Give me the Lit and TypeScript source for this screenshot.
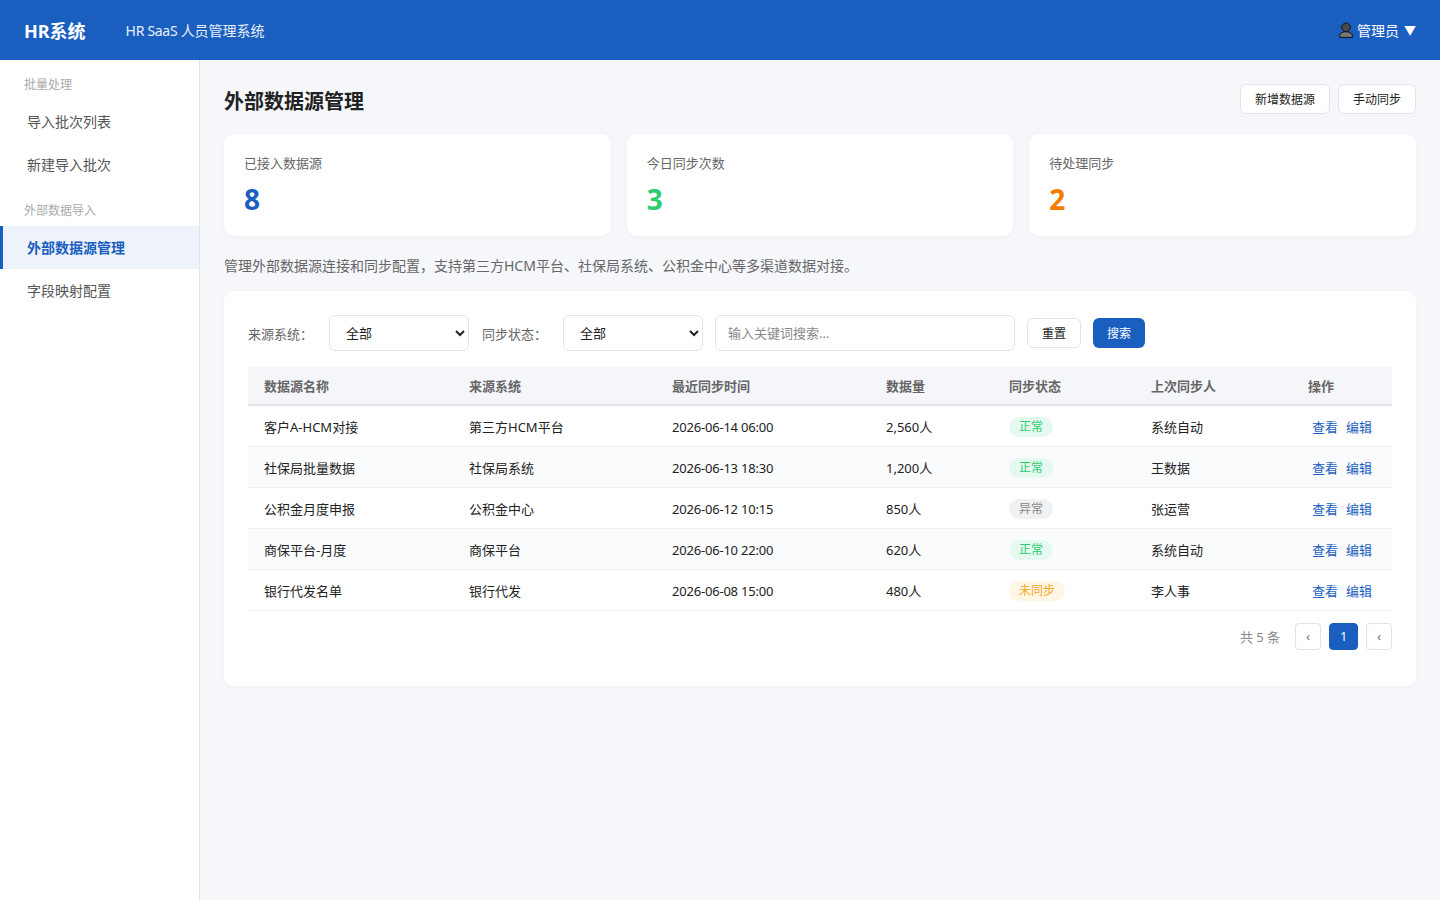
import { LitElement, html, css } from 'lit';
import { customElement } from 'lit/decorators.js';

type Row = {
  name: string;
  source: string;
  time: string;
  count: string;
  status: 'ok' | 'err' | 'none';
  label: string;
  user: string;
};

const ROWS: Row[] = [
  { name: '客户A-HCM对接', source: '第三方HCM平台', time: '2026-06-14 06:00', count: '2,560人', status: 'ok', label: '正常', user: '系统自动' },
  { name: '社保局批量数据', source: '社保局系统', time: '2026-06-13 18:30', count: '1,200人', status: 'ok', label: '正常', user: '王数据' },
  { name: '公积金月度申报', source: '公积金中心', time: '2026-06-12 10:15', count: '850人', status: 'err', label: '异常', user: '张运营' },
  { name: '商保平台-月度', source: '商保平台', time: '2026-06-10 22:00', count: '620人', status: 'ok', label: '正常', user: '系统自动' },
  { name: '银行代发名单', source: '银行代发', time: '2026-06-08 15:00', count: '480人', status: 'none', label: '未同步', user: '李人事' },
];

@customElement('app-root')
export class AppRoot extends LitElement {
  static styles = css`
    :host {
      display: block;
      min-height: 900px;
      background: #f5f7fb;
      color: #222;
      font-family: 'Noto Sans', 'Noto Sans CJK SC', sans-serif;
      font-size: 14px;
    }
    * { box-sizing: border-box; }

    .topbar {
      height: 60px;
      background: #1a5fbf;
      color: #fff;
      display: flex;
      align-items: center;
      padding: 0 24px;
    }
    .logo { font-size: 18px; font-weight: 700; margin-right: 40px; }
    .subtitle { font-size: 14px; opacity: 0.9; }
    .subtitle .latin { letter-spacing: -0.3px; }
    .user { margin-left: auto; font-size: 14px; display: flex; align-items: center; gap: 4px; }
    .user svg { width: 14px; height: 16px; }
    .caret { font-size: 12px; margin-left: 1px; }

    .body { display: flex; min-height: 840px; }

    .sidebar {
      width: 200px;
      flex: none;
      background: #fff;
      border-right: 1px solid #e0e3e8;
      padding-top: 16px;
    }
    .group {
      font-size: 12px;
      color: #aaa;
      padding: 0 24px;
      line-height: 18px;
      margin-bottom: 6px;
    }
    .nav + .group { margin-top: 16px; }
    .nav {
      display: block;
      height: 43px;
      line-height: 43px;
      padding-left: 24px;
      border-left: 3px solid transparent;
      color: #555;
      font-size: 14px;
    }
    .nav.active {
      background: #edf2fb;
      border-left-color: #1a5fbf;
      color: #1a5fbf;
      font-weight: 700;
    }

    .main { flex: 1; min-width: 0; padding: 24px; }

    .page-head {
      display: flex;
      align-items: center;
      justify-content: space-between;
      margin-bottom: 20px;
      height: 30px;
    }
    h1 { margin: 2px 0 0; font-size: 20px; font-weight: 700; color: #222; }
    .actions { display: flex; gap: 8px; }
    .btn {
      height: 30px;
      padding: 0 14px;
      border: 1px solid #e0e3e8;
      border-radius: 6px;
      background: #fff;
      color: #222;
      font: inherit;
      font-size: 12px;
    }
    .btn.primary { background: #1a5fbf; border: none; color: #fff; }

    .stats { display: grid; grid-template-columns: repeat(3, 1fr); gap: 16px; }
    .stat {
      height: 102px;
      background: #fff;
      border-radius: 10px;
      padding: 20px;
      box-shadow: 0 1px 4px rgba(0, 0, 0, 0.04);
    }
    .stat-label { font-size: 13px; color: #666; line-height: 19px; }
    .stat-value { font-size: 28px; font-weight: 700; line-height: 40px; margin-top: 6px; }
    .blue { color: #1a5fbf; }
    .green { color: #2ecc71; }
    .orange { color: #f57c00; }

    .desc { margin: 20px 0 16px; font-size: 14px; color: #666; line-height: 19px; }

    .panel {
      background: #fff;
      border-radius: 10px;
      padding: 24px;
      height: 395px;
      box-shadow: 0 1px 4px rgba(0, 0, 0, 0.04);
    }
    .filters { display: flex; align-items: center; height: 36px; margin-bottom: 16px; }
    .filter-label { font-size: 13px; color: #666; width: 81px; }
    .filter-label.second { margin-left: 13px; }
    select, input {
      height: 36px;
      border: 1px solid #e0e3e8;
      border-radius: 6px;
      background: #fff;
      font: inherit;
      font-size: 13px;
      color: #222;
      padding: 0 12px;
    }
    select { width: 140px; }
    input { width: 300px; margin: 0 12px; }
    input::placeholder { color: #888; }
    .search-btn { margin-left: 12px; }

    table { width: 100%; border-collapse: collapse; font-size: 13px; table-layout: fixed; }
    .c1 { width: 205px; }
    .c2 { width: 203px; }
    .c3 { width: 214px; }
    .c4 { width: 123px; }
    .c5 { width: 142px; }
    .c6 { width: 157px; }
    .c7 { width: 100px; }
    th {
      background: #f5f6fa;
      color: #666;
      font-weight: 700;
      text-align: left;
      height: 38px;
      padding: 0 16px;
      border-bottom: 2px solid #e0e3e8;
    }
    td {
      height: 41px;
      padding: 1px 16px 0;
      border-bottom: 1px solid #eef0f3;
      color: #222;
      white-space: nowrap;
    }
    td.time { letter-spacing: -0.2px; padding-top: 3px; }
    td.state { padding-top: 3px; }
    tbody tr:nth-child(even) td { background: #fafbfd; }

    .tag {
      display: inline-block;
      font-size: 12px;
      line-height: 20px;
      padding: 0 10px;
      border-radius: 10px;
    }
    .tag.ok { background: #e6f9f0; color: #2ecc71; }
    .tag.err { background: #f0f1f3; color: #888; }
    .tag.none { background: #fff6e5; color: #f5a623; }

    .link { color: #1a5fbf; padding: 0 4px; }

    .pager {
      display: flex;
      align-items: center;
      justify-content: flex-end;
      gap: 8px;
      margin-top: 12px;
      height: 27px;
    }
    .total { font-size: 13px; color: #888; margin-right: 7px; }
    .page {
      height: 27px;
      min-width: 26px;
      padding: 0 10px;
      border: 1px solid #e0e3e8;
      border-radius: 4px;
      background: #fff;
      color: #666;
      font-size: 12px;
      display: flex;
      align-items: center;
      justify-content: center;
    }
    .page.current { background: #1a5fbf; border-color: #1a5fbf; color: #fff; }
  `;

  render() {
    return html`
      <header class="topbar">
        <span class="logo">HR系统</span>
        <span class="subtitle"><span class="latin">HR SaaS </span>人员管理系统</span>
        <span class="user">
          <svg viewBox="0 0 14 16">
            <path d="M.7 15.4v-2.2c0-1 .5-1.7 1.4-2.1L5 9.8h4l2.9 1.3c.9.4 1.4 1.1 1.4 2.1v2.2z" fill="#777" stroke="#111" stroke-width="1" />
            <circle cx="7" cy="5.4" r="4.3" fill="#4a4a4a" stroke="#111" stroke-width="1" />
          </svg>
          <span>管理员</span>
          <span class="caret">▼</span>
        </span>
      </header>
      <div class="body">
        <nav class="sidebar">
          <div class="group">批量处理</div>
          <a class="nav">导入批次列表</a>
          <a class="nav">新建导入批次</a>
          <div class="group">外部数据导入</div>
          <a class="nav active">外部数据源管理</a>
          <a class="nav">字段映射配置</a>
        </nav>
        <main class="main">
          <div class="page-head">
            <h1>外部数据源管理</h1>
            <div class="actions">
              <button class="btn">新增数据源</button>
              <button class="btn">手动同步</button>
            </div>
          </div>
          <section class="stats">
            <div class="stat"><div class="stat-label">已接入数据源</div><div class="stat-value blue">8</div></div>
            <div class="stat"><div class="stat-label">今日同步次数</div><div class="stat-value green">3</div></div>
            <div class="stat"><div class="stat-label">待处理同步</div><div class="stat-value orange">2</div></div>
          </section>
          <p class="desc">管理外部数据源连接和同步配置，支持第三方HCM平台、社保局系统、公积金中心等多渠道数据对接。</p>
          <section class="panel">
            <div class="filters">
              <span class="filter-label">来源系统：</span>
              <select><option>全部</option></select>
              <span class="filter-label second">同步状态：</span>
              <select><option>全部</option></select>
              <input placeholder="输入关键词搜索..." />
              <button class="btn">重置</button>
              <button class="btn primary search-btn">搜索</button>
            </div>
            <table>
              <colgroup>
                <col class="c1" /><col class="c2" /><col class="c3" /><col class="c4" /><col class="c5" /><col class="c6" /><col class="c7" />
              </colgroup>
              <thead>
                <tr>
                  <th>数据源名称</th><th>来源系统</th><th>最近同步时间</th><th>数据量</th><th>同步状态</th><th>上次同步人</th><th>操作</th>
                </tr>
              </thead>
              <tbody>
                ${ROWS.map(
                  (r) => html`<tr>
                    <td>${r.name}</td>
                    <td>${r.source}</td>
                    <td class="time">${r.time}</td>
                    <td>${r.count}</td>
                    <td class="state"><span class="tag ${r.status}">${r.label}</span></td>
                    <td>${r.user}</td>
                    <td><a class="link">查看</a><a class="link">编辑</a></td>
                  </tr>`
                )}
              </tbody>
            </table>
            <div class="pager">
              <span class="total">共 5 条</span>
              <span class="page">‹</span>
              <span class="page current">1</span>
              <span class="page">‹</span>
            </div>
          </section>
        </main>
      </div>
    `;
  }
}
